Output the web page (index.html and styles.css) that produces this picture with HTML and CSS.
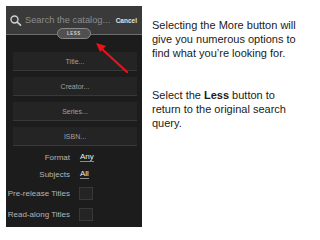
FILE: index.html
```html
<!DOCTYPE html>
<html>
<head>
<meta charset="utf-8">
<link rel="stylesheet" href="styles.css">
</head>
<body>
<div class="slide">
  <div class="phone">
    <div class="header">
      <svg class="search-icon" width="12" height="11" viewBox="0 0 12 11">
        <circle cx="4.5" cy="4.5" r="3.5" fill="none" stroke="#d0d0d0" stroke-width="1.4"/>
        <line x1="7.2" y1="7.2" x2="10.5" y2="10.2" stroke="#d0d0d0" stroke-width="1.6" stroke-linecap="round"/>
      </svg>
      <span class="placeholder">Search the catalog...</span>
      <span class="cancel">Cancel</span>
    </div>
    <div class="less">LESS</div>
    <div class="fields">
      <div class="field">Title...</div>
      <div class="field">Creator...</div>
      <div class="field">Series...</div>
      <div class="field">ISBN...</div>
    </div>
    <div class="options">
      <div class="opt"><span class="lbl">Format</span><span class="val">Any</span></div>
      <div class="opt"><span class="lbl">Subjects</span><span class="val">All</span></div>
      <div class="opt tall"><span class="lbl">Pre-release Titles</span><span class="box"></span></div>
      <div class="opt tall"><span class="lbl">Read-along Titles</span><span class="box"></span></div>
    </div>
    <svg class="arrow" width="40" height="36" viewBox="0 0 40 36">
      <line x1="34" y1="31" x2="9" y2="8" stroke="#e8141b" stroke-width="2.2" stroke-linecap="round"/>
      <polygon points="3,2 13,5 7,11" fill="#e8141b"/>
    </svg>
  </div>
  <div class="notes">
    <p>Selecting the More button will give you numerous options to find what you’re looking for.</p>
    <p>Select the <b>Less</b> button to return to the original search query.</p>
  </div>
</div>
</body>
</html>
```

FILE: styles.css
```css
html, body { margin: 0; padding: 0; background: #fff; }
body { width: 320px; height: 240px; overflow: hidden; font-family: "Liberation Sans", Arial, sans-serif; }
.slide { display: flex; padding: 6px 0 0 6px; }
.phone {
  position: relative;
  width: 136px;
  height: 221px;
  background: #1c1c1c;
  display: flex;
  flex-direction: column;
}
.header {
  height: 29px;
  background: #3a3a3a;
  border-bottom: 1px solid #6d6d6d;
  display: flex;
  align-items: center;
  padding: 0 5px 0 4px;
  box-sizing: border-box;
}
.search-icon { flex: none; margin-right: 3px; }
.placeholder { color: #8c8c8c; font-size: 9.3px; flex: 1; white-space: nowrap; }
.cancel { color: #e0e0e0; font-size: 6.5px; font-weight: bold; }
.less {
  position: absolute;
  left: 51px;
  top: 22px;
  width: 34px;
  height: 11px;
  box-sizing: border-box;
  border: 1px solid #8a8a8a;
  border-radius: 6px;
  background: #505050;
  color: #d0d0d0;
  font-size: 4.5px;
  font-weight: bold;
  letter-spacing: 0.5px;
  display: flex;
  align-items: center;
  justify-content: center;
}
.fields {
  display: flex;
  flex-direction: column;
  gap: 6px;
  padding: 17px 5px 0 7px;
}
.field {
  height: 19px;
  box-sizing: border-box;
  background: #242424;
  border-bottom: 1px solid #383838;
  color: #a0a0a0;
  font-size: 7px;
  display: flex;
  align-items: center;
  justify-content: center;
}
.options {
  display: flex;
  flex-direction: column;
  padding-top: 2.5px;
}
.opt {
  display: flex;
  align-items: center;
  height: 17px;
}
.opt.tall { height: 21px; }
.lbl {
  width: 64px;
  text-align: right;
  color: #b4b4b4;
  font-size: 8px;
  white-space: nowrap;
}
.val {
  margin-left: 10px;
  color: #ececec;
  font-size: 8px;
  line-height: 9px;
  border-bottom: 1px solid #8a8a8a;
}
.box {
  margin-left: 9px;
  width: 14px;
  height: 13px;
  box-sizing: border-box;
  background: #242424;
  border: 1px solid #383838;
}
.arrow { position: absolute; left: 87px; top: 35px; }
.notes {
  padding: 12px 0 0 10px;
  width: 148px;
  color: #1a1a1a;
  font-size: 11px;
  line-height: 14px;
}
.notes p { margin: 0 0 28px 0; }
```
